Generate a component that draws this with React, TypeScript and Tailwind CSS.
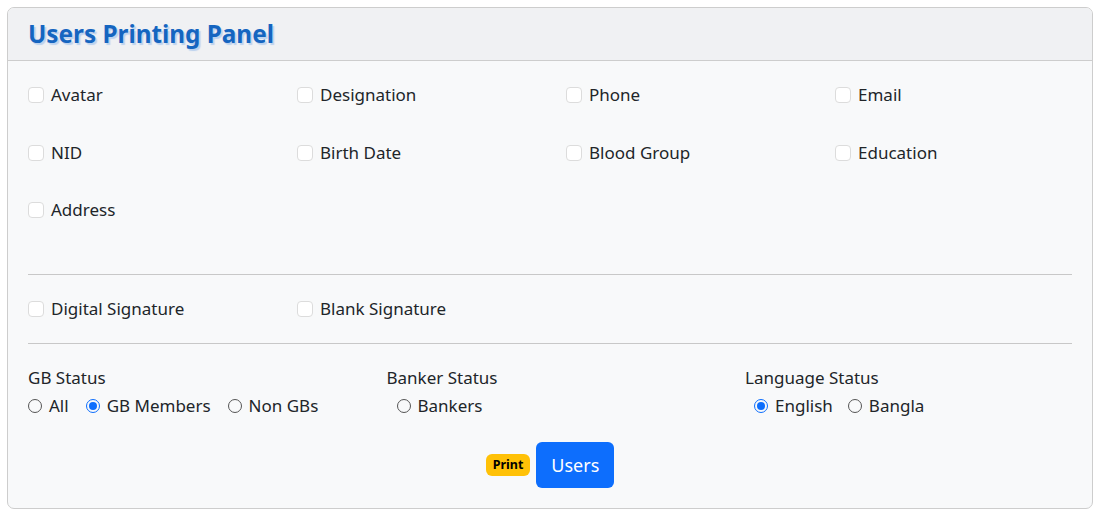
import React from 'react';

const fields = ['Avatar', 'Designation', 'Phone', 'Email', 'NID', 'Birth Date', 'Blood Group', 'Education', 'Address'];

const Check = ({ label }: { label: string }) => (
  <label className="flex items-center gap-[7px] text-[17px] leading-[24px] text-[#212529]">
    <span className="h-4 w-4 rounded-[4px] border border-[#dcdcdc] bg-white" />
    {label}
  </label>
);

const Radio = ({ label, checked }: { label: string; checked?: boolean }) => (
  <label className="flex items-center gap-[7px] text-[17px] leading-[24px] text-[#212529]">
    {checked ? (
      <span className="flex h-[14px] w-[14px] items-center justify-center rounded-full border-[1.5px] border-[#0d6efd]">
        <span className="h-[8px] w-[8px] rounded-full bg-[#0d6efd]" />
      </span>
    ) : (
      <span className="h-[14px] w-[14px] rounded-full border border-[#555]" />
    )}
    {label}
  </label>
);

export default function App() {
  return (
    <div className="min-h-[518px] bg-white p-[7px] font-['Noto_Sans',sans-serif]">
      <div className="overflow-hidden rounded-[7px] border border-[#cdcdcd] bg-[#f8f9fa]">
        {/* header */}
        <div className="h-[53px] border-b border-[#cdcdcd] bg-[#f0f1f3] px-[20px] pt-[9px]">
          <h1 className="text-[24.3px] font-bold leading-[34px] text-[#1565c0] [text-shadow:2px_2px_1px_#bcd2ee]">
            Users Printing Panel
          </h1>
        </div>

        {/* body */}
        <div className="px-[20px] pt-[22px] pb-[20px]">
          <div className="grid grid-cols-[269px_269px_269px_269px] gap-y-[33.5px]">
            {fields.map((f) => (
              <Check key={f} label={f} />
            ))}
          </div>

          <div className="mt-[52px] border-t border-[#c8c8c8]" />
          <div className="grid grid-cols-[269px_269px_269px_269px] py-[22px]">
            <Check label="Digital Signature" />
            <Check label="Blank Signature" />
          </div>
          <div className="border-t border-[#c8c8c8]" />

          <div className="mt-[23px] grid grid-cols-[358.5px_358.5px_358.5px] text-[17px] text-[#212529]">
            <div>
              <div className="leading-[22px]">GB Status</div>
              <div className="mt-[5px] flex gap-[17px]">
                <Radio label="All" />
                <Radio label="GB Members" checked />
                <Radio label="Non GBs" />
              </div>
            </div>
            <div>
              <div className="leading-[22px]">Banker Status</div>
              <div className="mt-[5px] flex pl-[10px]">
                <Radio label="Bankers" />
              </div>
            </div>
            <div>
              <div className="leading-[22px]">Language Status</div>
              <div className="mt-[5px] flex gap-[15px] pl-[9px]">
                <Radio label="English" checked />
                <Radio label="Bangla" />
              </div>
            </div>
          </div>

          <div className="mt-[24px] flex items-center justify-center gap-[6px]">
            <span className="rounded-[6px] bg-[#ffc107] px-[7px] py-[3px] text-[12.5px] font-bold leading-[16px] text-black">
              Print
            </span>
            <button className="h-[46px] rounded-[6px] bg-[#0d6efd] px-[15px] text-[18px] text-white">
              Users
            </button>
          </div>
        </div>
      </div>
    </div>
  );
}
